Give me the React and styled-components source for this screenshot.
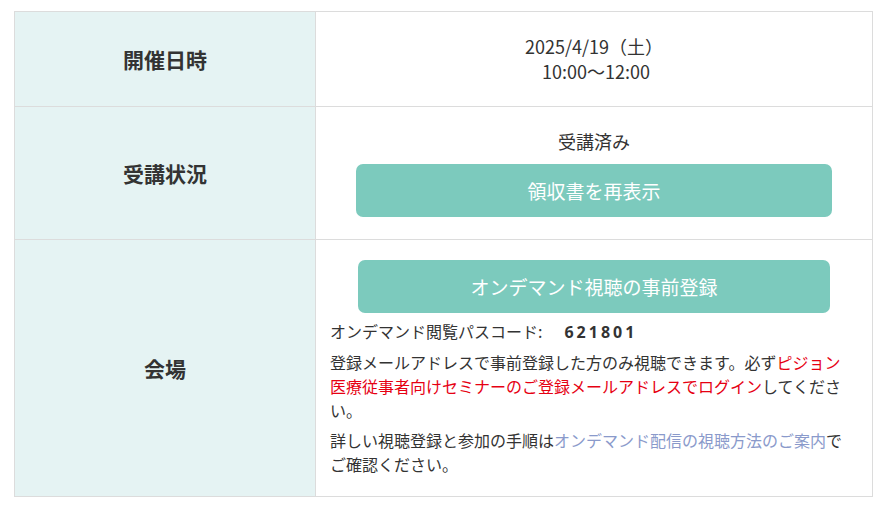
import React from "react";
import styled, { createGlobalStyle } from "styled-components";

const GlobalStyle = createGlobalStyle`
  body {
    margin: 0;
    background: #fff;
    font-family: "Noto Sans CJK JP", "Noto Sans", sans-serif;
    color: #333;
  }
`;

const Wrapper = styled.div`
  padding: 11px 0 0 14px;
`;

const Table = styled.div`
  width: 859px;
  display: grid;
  grid-template-columns: 301px 1fr;
  border: 1px solid #dcdcdc;
  border-bottom: none;
  box-sizing: border-box;
`;

const Label = styled.div`
  background: #e5f3f3;
  border-right: 1px solid #dcdcdc;
  border-bottom: 1px solid #dcdcdc;
  display: flex;
  align-items: center;
  justify-content: center;
  font-size: 21px;
  font-weight: 700;
  color: #333;
  min-height: ${(p) => p.h}px;
`;

const Value = styled.div`
  border-bottom: 1px solid #dcdcdc;
  padding: ${(p) => (p.compact ? "0 16px 0 14px" : "20px 16px 20px 14px")};
  display: flex;
  flex-direction: column;
  justify-content: ${(p) => (p.left ? "flex-start" : "center")};
  align-items: ${(p) => (p.left ? "stretch" : "center")};
  text-align: ${(p) => (p.left ? "left" : "center")};
`;

const DateText = styled.div`
  font-size: 18px;
  line-height: 25px;
  text-align: center;
  margin-left: 2px;
`;

const Status = styled.div`
  font-size: 18px;
  line-height: 24px;
  margin: 0 0 11px 2px;
`;

const Button = styled.button`
  display: block;
  align-self: center;
  width: ${(p) => p.w}px;
  height: 53px;
  margin-left: 2px;
  border: none;
  border-radius: 7px;
  background: #7ccabd;
  color: #fff;
  font-family: inherit;
  font-size: 19px;
  cursor: pointer;
`;

const Para = styled.p`
  margin: 6px 0 0;
  font-size: 16px;
  line-height: 24px;
  color: #333;
`;

const Code = styled.span`
  font-family: "Noto Sans", sans-serif;
  font-weight: 700;
  letter-spacing: 3px;
  margin-left: 22px;
`;

const Red = styled.span`
  color: #e60012;
`;

const Link = styled.a`
  color: #8a9acb;
  text-decoration: none;
`;

export default function App() {
  return (
    <>
      <GlobalStyle />
      <Wrapper>
        <Table>
          <Label h={94}>開催日時</Label>
          <Value compact>
            <DateText>
              2025/4/19（土）
              <br />
              &nbsp;10:00〜12:00
            </DateText>
          </Value>

          <Label h={132}>受講状況</Label>
          <Value>
            <Status>受講済み</Status>
            <Button w={476}>領収書を再表示</Button>
          </Value>

          <Label h={256}>会場</Label>
          <Value left>
            <Button w={472}>オンデマンド視聴の事前登録</Button>
            <Para>
              オンデマンド閲覧パスコード:<Code>621801</Code>
            </Para>
            <Para>
              登録メールアドレスで事前登録した方のみ視聴できます。必ず
              <Red>ピジョン医療従事者向けセミナーのご登録メールアドレスでログイン</Red>
              してください。
            </Para>
            <Para>
              詳しい視聴登録と参加の手順は
              <Link href="#">オンデマンド配信の視聴方法のご案内</Link>
              でご確認ください。
            </Para>
          </Value>
        </Table>
      </Wrapper>
    </>
  );
}
